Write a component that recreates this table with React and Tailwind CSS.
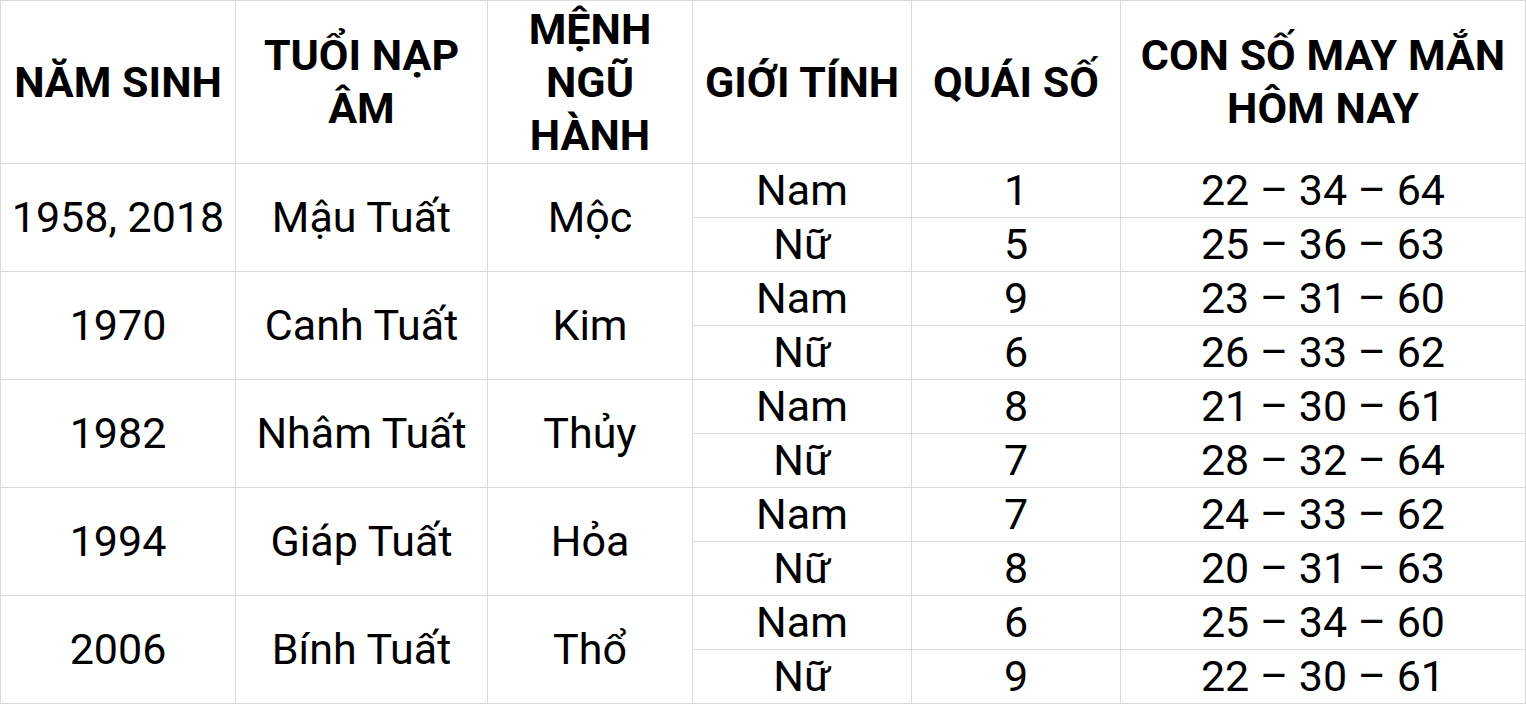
import React from "react";

const HEADERS = [
  "NĂM SINH",
  "TUỔI NẠP ÂM",
  "MỆNH NGŨ HÀNH",
  "GIỚI TÍNH",
  "QUÁI SỐ",
  "CON SỐ MAY MẮN HÔM NAY",
];

const ROWS = [
  { year: "1958, 2018", tuoi: "Mậu Tuất", menh: "Mộc", nam: ["1", "22 – 34 – 64"], nu: ["5", "25 – 36 – 63"] },
  { year: "1970", tuoi: "Canh Tuất", menh: "Kim", nam: ["9", "23 – 31 – 60"], nu: ["6", "26 – 33 – 62"] },
  { year: "1982", tuoi: "Nhâm Tuất", menh: "Thủy", nam: ["8", "21 – 30 – 61"], nu: ["7", "28 – 32 – 64"] },
  { year: "1994", tuoi: "Giáp Tuất", menh: "Hỏa", nam: ["7", "24 – 33 – 62"], nu: ["8", "20 – 31 – 63"] },
  { year: "2006", tuoi: "Bính Tuất", menh: "Thổ", nam: ["6", "25 – 34 – 60"], nu: ["9", "22 – 30 – 61"] },
];

const cell = "border border-[#dadada] px-[2px] text-center align-middle leading-[53px] p-0 whitespace-nowrap";

export default function App() {
  return (
    <div className="bg-white w-[1526px] h-[704px] overflow-hidden text-black" style={{ fontFamily: "Roboto, 'Noto Sans', sans-serif" }}>
      <table className="border-collapse table-fixed w-[1525px] text-[43px]">
        <colgroup>
          <col className="w-[235px]" />
          <col className="w-[252px]" />
          <col className="w-[205px]" />
          <col className="w-[219px]" />
          <col className="w-[209px]" />
          <col className="w-[405px]" />
        </colgroup>
        <thead>
          <tr className="h-[163px]">
            {HEADERS.map((h) => (
              <th key={h} className="border border-[#dadada] px-[4px] text-center align-middle font-bold leading-[53px]">
                {h}
              </th>
            ))}
          </tr>
        </thead>
        <tbody>
          {ROWS.map((r) => (
            <React.Fragment key={r.year}>
              <tr className="h-[54px]">
                <td rowSpan={2} className={cell}>{r.year}</td>
                <td rowSpan={2} className={cell}>{r.tuoi}</td>
                <td rowSpan={2} className={cell}>{r.menh}</td>
                <td className={cell}>Nam</td>
                <td className={cell}>{r.nam[0]}</td>
                <td className={cell}>{r.nam[1]}</td>
              </tr>
              <tr className="h-[54px]">
                <td className={cell}>Nữ</td>
                <td className={cell}>{r.nu[0]}</td>
                <td className={cell}>{r.nu[1]}</td>
              </tr>
            </React.Fragment>
          ))}
        </tbody>
      </table>
    </div>
  );
}
